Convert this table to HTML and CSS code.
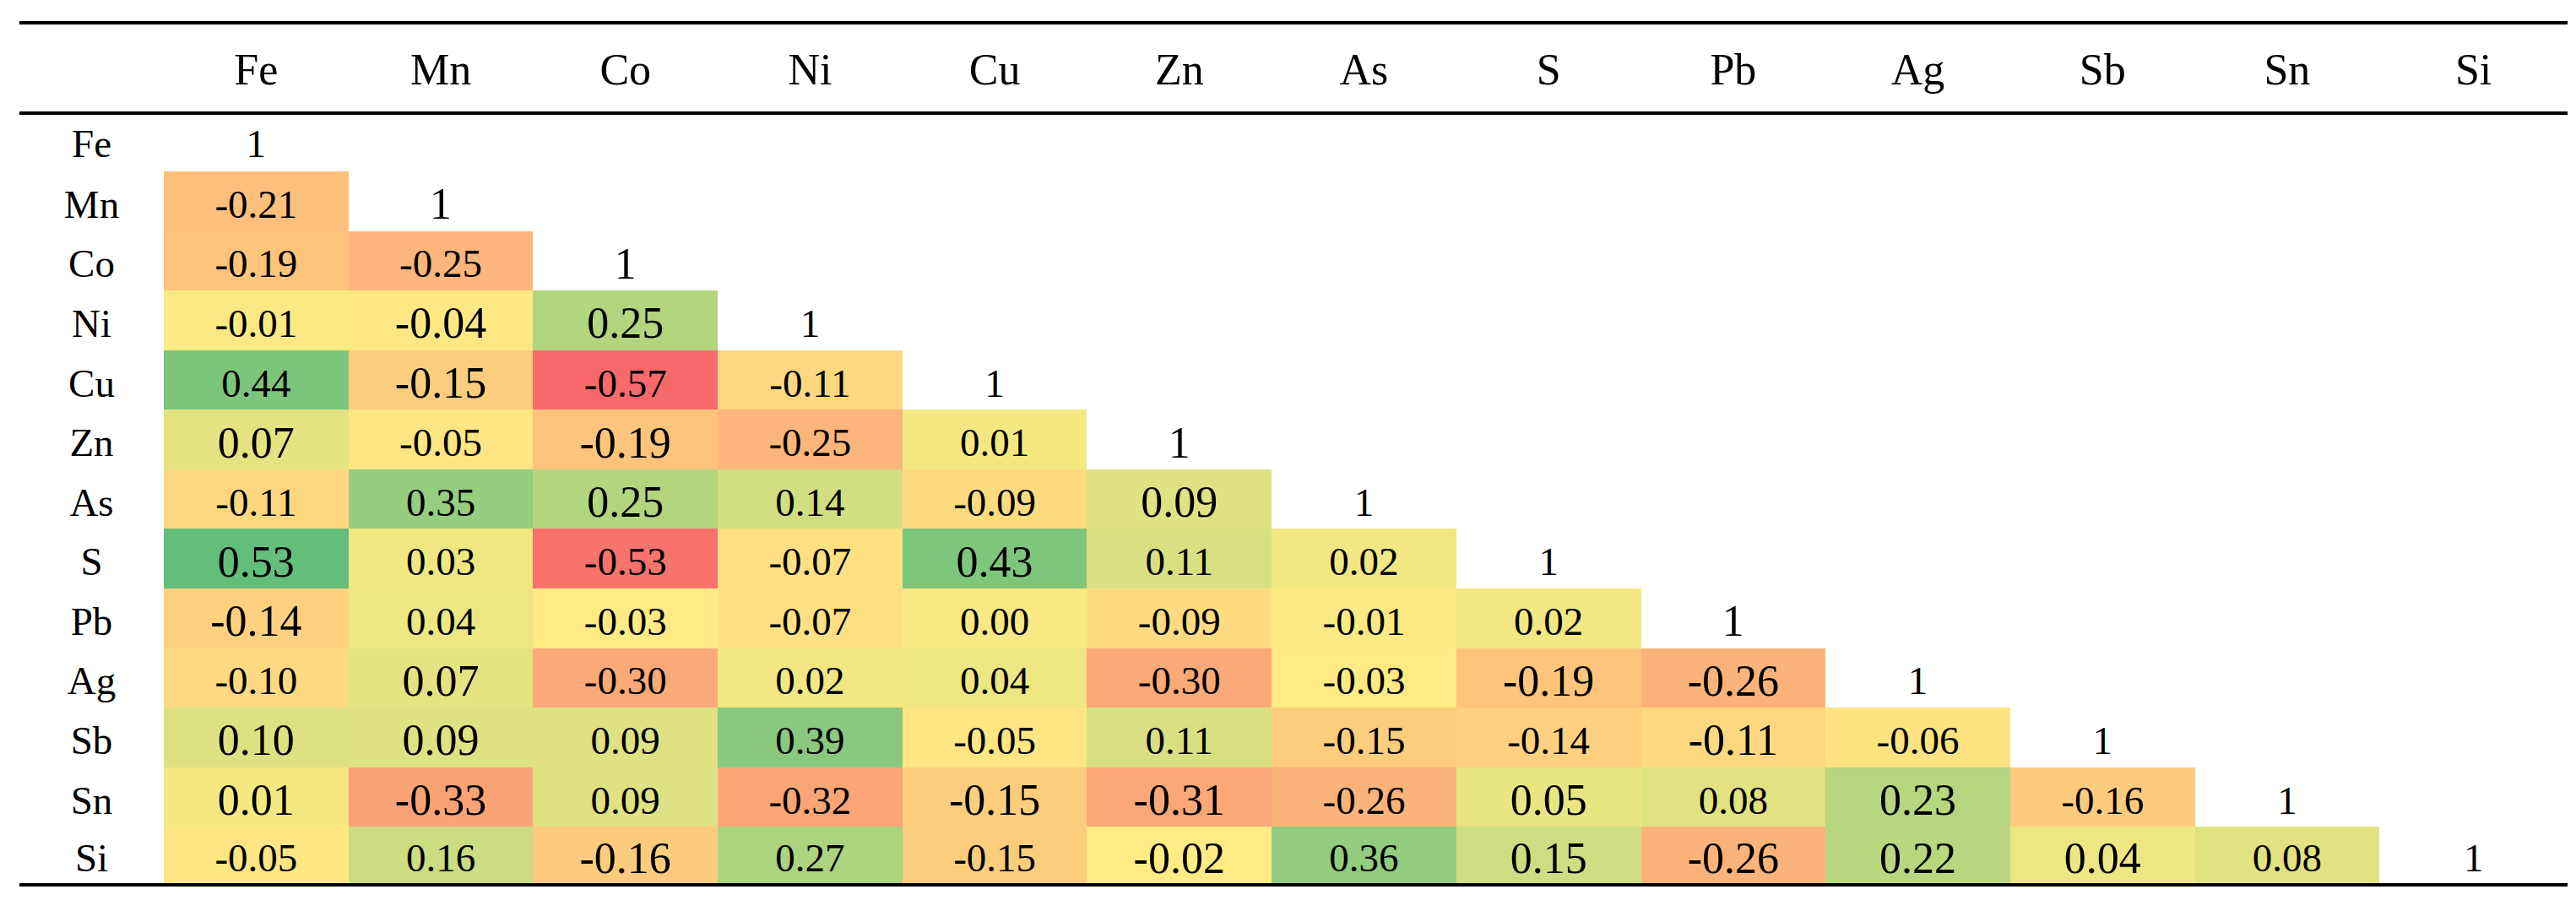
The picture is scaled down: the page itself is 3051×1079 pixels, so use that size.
FILE: index.html
```html
<!DOCTYPE html>
<html lang="en">
<head>
<meta charset="utf-8">
<title>Correlation matrix</title>
<link rel="stylesheet" href="styles.css">
</head>
<body>
<table class="corr">
  <colgroup>
    <col class="col-label">
    <col class="col-data" span="12">
    <col class="col-last">
  </colgroup>
  <thead>
    <tr>
      <th class="corner"></th>
      <th>Fe</th><th>Mn</th><th>Co</th><th>Ni</th><th>Cu</th><th>Zn</th><th>As</th><th>S</th><th>Pb</th><th>Ag</th><th>Sb</th><th>Sn</th><th>Si</th>
    </tr>
  </thead>
  <tbody>
    <tr class="first">
      <th>Fe</th><td class="d">1</td><td></td><td></td><td></td><td></td><td></td><td></td><td></td><td></td><td></td><td></td><td></td><td></td>
    </tr>
    <tr>
      <th>Mn</th><td class="v">-0.21</td><td class="d lg">1</td><td></td><td></td><td></td><td></td><td></td><td></td><td></td><td></td><td></td><td></td><td></td>
    </tr>
    <tr>
      <th>Co</th><td class="v">-0.19</td><td class="v">-0.25</td><td class="d lg">1</td><td></td><td></td><td></td><td></td><td></td><td></td><td></td><td></td><td></td><td></td>
    </tr>
    <tr>
      <th>Ni</th><td class="v">-0.01</td><td class="v lg">-0.04</td><td class="v lg">0.25</td><td class="d">1</td><td></td><td></td><td></td><td></td><td></td><td></td><td></td><td></td><td></td>
    </tr>
    <tr>
      <th>Cu</th><td class="v">0.44</td><td class="v lg">-0.15</td><td class="v">-0.57</td><td class="v">-0.11</td><td class="d">1</td><td></td><td></td><td></td><td></td><td></td><td></td><td></td><td></td>
    </tr>
    <tr>
      <th>Zn</th><td class="v lg">0.07</td><td class="v">-0.05</td><td class="v lg">-0.19</td><td class="v">-0.25</td><td class="v">0.01</td><td class="d lg">1</td><td></td><td></td><td></td><td></td><td></td><td></td><td></td>
    </tr>
    <tr>
      <th>As</th><td class="v">-0.11</td><td class="v">0.35</td><td class="v lg">0.25</td><td class="v">0.14</td><td class="v">-0.09</td><td class="v lg">0.09</td><td class="d">1</td><td></td><td></td><td></td><td></td><td></td><td></td>
    </tr>
    <tr>
      <th>S</th><td class="v lg">0.53</td><td class="v">0.03</td><td class="v">-0.53</td><td class="v">-0.07</td><td class="v lg">0.43</td><td class="v">0.11</td><td class="v">0.02</td><td class="d">1</td><td></td><td></td><td></td><td></td><td></td>
    </tr>
    <tr>
      <th>Pb</th><td class="v lg">-0.14</td><td class="v">0.04</td><td class="v">-0.03</td><td class="v">-0.07</td><td class="v">0.00</td><td class="v">-0.09</td><td class="v">-0.01</td><td class="v">0.02</td><td class="d lg">1</td><td></td><td></td><td></td><td></td>
    </tr>
    <tr>
      <th>Ag</th><td class="v">-0.10</td><td class="v lg">0.07</td><td class="v">-0.30</td><td class="v">0.02</td><td class="v">0.04</td><td class="v">-0.30</td><td class="v">-0.03</td><td class="v lg">-0.19</td><td class="v lg">-0.26</td><td class="d">1</td><td></td><td></td><td></td>
    </tr>
    <tr>
      <th>Sb</th><td class="v lg">0.10</td><td class="v lg">0.09</td><td class="v">0.09</td><td class="v">0.39</td><td class="v">-0.05</td><td class="v">0.11</td><td class="v">-0.15</td><td class="v">-0.14</td><td class="v lg">-0.11</td><td class="v">-0.06</td><td class="d">1</td><td></td><td></td>
    </tr>
    <tr>
      <th>Sn</th><td class="v lg">0.01</td><td class="v lg">-0.33</td><td class="v">0.09</td><td class="v">-0.32</td><td class="v lg">-0.15</td><td class="v lg">-0.31</td><td class="v">-0.26</td><td class="v lg">0.05</td><td class="v">0.08</td><td class="v lg">0.23</td><td class="v">-0.16</td><td class="d">1</td><td></td>
    </tr>
    <tr class="last">
      <th>Si</th><td class="v">-0.05</td><td class="v">0.16</td><td class="v lg">-0.16</td><td class="v">0.27</td><td class="v">-0.15</td><td class="v lg">-0.02</td><td class="v">0.36</td><td class="v lg">0.15</td><td class="v lg">-0.26</td><td class="v lg">0.22</td><td class="v lg">0.04</td><td class="v">0.08</td><td class="d">1</td>
    </tr>
  </tbody>
</table>
<script src="script.js"></script>
</body>
</html>
```

FILE: styles.css
```css
html, body {
  margin: 0;
  padding: 0;
  background: #ffffff;
}

body {
  padding: 25px 0 0 23px;
  font-family: "Liberation Serif", "Times New Roman", serif;
  color: #000000;
}

.corr {
  border-collapse: separate;
  border-spacing: 0;
  table-layout: fixed;
  width: 3018px;
}

.col-label {
  width: 171px;
}

.col-data {
  width: 218.7px;
}

.col-last {
  width: 222.6px;
}

.corr th,
.corr td {
  padding: 0;
  text-align: center;
  vertical-align: middle;
  font-weight: normal;
  line-height: 1;
}

.corr thead th {
  box-sizing: border-box;
  height: 111px;
  border-top: 4px solid #000;
  border-bottom: 4px solid #000;
  font-size: 52px;
  padding-top: 4px;
}

.corr tbody tr {
  height: 70.58px;
}

.corr tbody tr.first {
  height: 67px;
}

.corr tbody th,
.corr tbody td {
  font-size: 47px;
  padding-top: 8px;
}

.corr tbody tr.first th,
.corr tbody tr.first td {
  padding-top: 2px;
}

.corr tbody td.lg {
  font-size: 52px;
}

.corr tbody tr.last th,
.corr tbody tr.last td {
  border-bottom: 4px solid #000;
}
```

FILE: script.js
```js
(function () {
  var RED = [248, 105, 107];
  var YELLOW = [255, 235, 132];
  var GREEN = [99, 190, 123];
  var MIN = -0.57, MID = -0.025, MAX = 0.53;
  var cells = document.querySelectorAll('.corr td.v');
  for (var i = 0; i < cells.length; i++) {
    var v = parseFloat(cells[i].textContent);
    var a, b, t;
    if (v <= MID) {
      a = RED; b = YELLOW; t = (v - MIN) / (MID - MIN);
    } else {
      a = YELLOW; b = GREEN; t = (v - MID) / (MAX - MID);
    }
    t = Math.max(0, Math.min(1, t));
    var c = [];
    for (var k = 0; k < 3; k++) {
      c.push(Math.round(a[k] + (b[k] - a[k]) * t));
    }
    cells[i].style.backgroundColor = 'rgb(' + c.join(',') + ')';
  }
})();
```
